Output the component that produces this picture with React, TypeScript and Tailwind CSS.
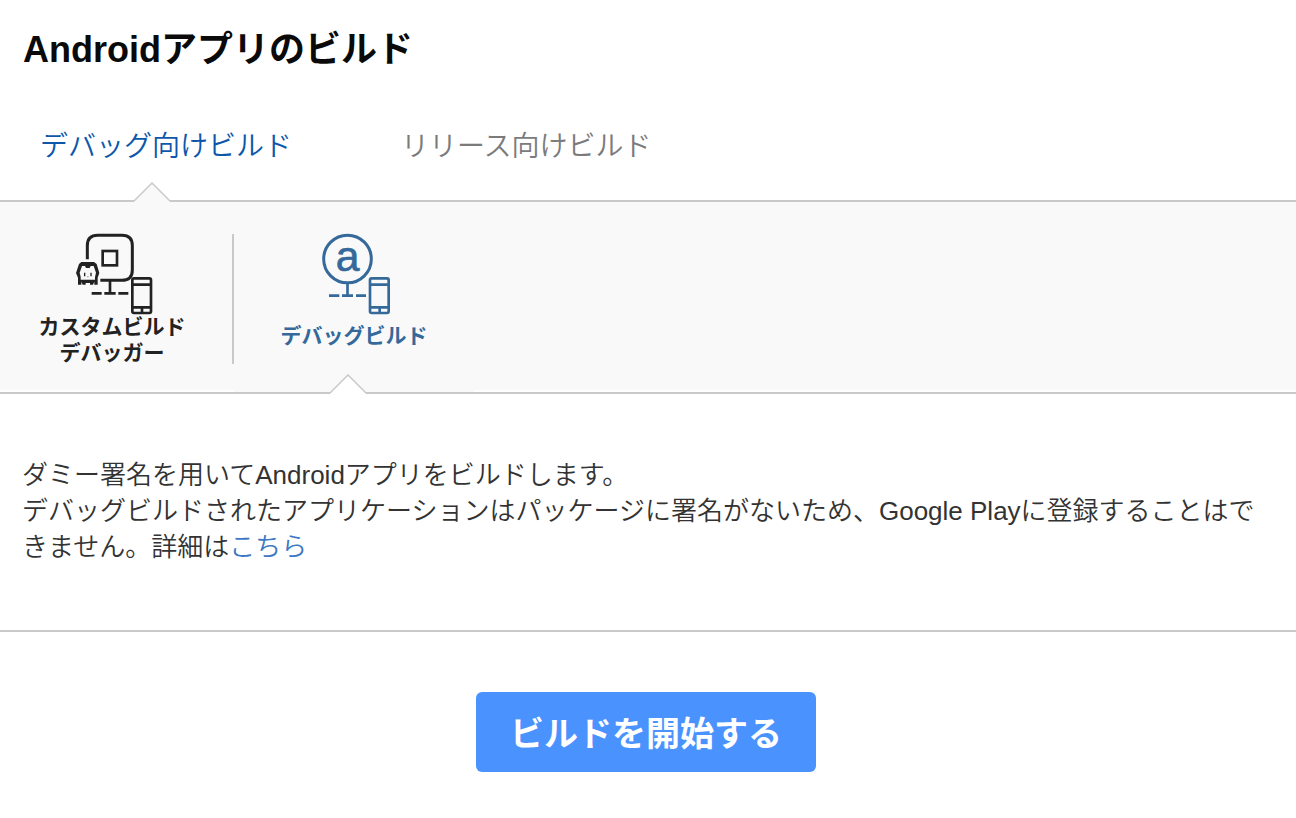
import { useState } from "react";

function Notch({ fill, className }: { fill: string; className: string }) {
  return (
    <svg className={`absolute h-5 w-9 ${className}`} viewBox="0 0 36 20" aria-hidden="true">
      <path d="M0 20 V18.6 L18 1 L36 18.6 V20 Z" fill={fill} />
      <path d="M0 19 L18 1 L36 19" fill="none" stroke="#c9c9c9" strokeWidth="1.5" />
    </svg>
  );
}

function Phone() {
  return (
    <g fill="none" stroke="currentColor" strokeWidth="8">
      <rect x="217" y="160" width="56" height="104" rx="5" />
      <path d="M216 179 H274 M216 247 H274 M246 247 V264" />
    </g>
  );
}

function CustomBuildIcon() {
  return (
    <svg className="h-20 w-20 overflow-visible" viewBox="36 27 240 240" aria-hidden="true">
      <g fill="none" stroke="currentColor">
        <path d="M82 103 V62 Q82 31 113 31 H186 Q217 31 217 62 V135 Q217 166 186 166 H121" strokeWidth="9" />
        <rect x="128" y="78" width="43" height="43" strokeWidth="8" />
        <path d="M150 168 V203" strokeWidth="8" />
        <path d="M95 205 H125 M133 205 H167 M175 205 H205" strokeWidth="8" />
      </g>
      <path
        d="M64 111 H102 L110 117 L118 144 L113 158 V179 H103 V170 L99 179 H90 V174 H77 V179 H68 L64 170 V179 H54 V158 L48 144 L57 117 Z M66 123 L59 143 L62 156 V164 H105 V156 L108 143 L101 123 H92 L89 129 H78 L75 123 Z"
        fill="currentColor"
        fillRule="evenodd"
      />
      <path d="M74 143 V154 M93 143 V154" stroke="currentColor" strokeWidth="4" />
      <path d="M81 155 H86" stroke="currentColor" strokeWidth="3" opacity="0.4" />
      <Phone />
    </svg>
  );
}

function DebugBuildIcon() {
  return (
    <svg className="h-20 w-20 overflow-visible" viewBox="42 27 240 240" aria-hidden="true">
      <g fill="none" stroke="currentColor">
        <circle cx="142.500" cy="102" r="71.500" strokeWidth="9" />
        <path d="M142.500 174 V211" strokeWidth="8" />
        <path d="M87 212 H118 M126 212 H159 M168 212 H198" strokeWidth="8" />
      </g>
      <text
        x="143"
        y="138"
        textAnchor="middle"
        fill="currentColor"
        stroke="currentColor"
        strokeWidth="2"
        className="font-['Liberation_Sans',sans-serif] text-[128px] font-normal"
      >
        a
      </text>
      <g transform="translate(-7 0)">
        <Phone />
      </g>
    </svg>
  );
}

export default function App() {
  const [target, setTarget] = useState("debug");
  const [kind, setKind] = useState("debug");

  return (
    <main className="bg-white font-['Liberation_Sans','Noto_Sans_CJK_JP',sans-serif] text-[#333]" lang="ja">
      <h1 className="px-[23px] pt-6 text-4xl leading-[52px] font-bold text-[#0a0a0a]">Androidアプリのビルド</h1>

      <nav className="relative mt-10 flex gap-[109px] border-b-2 border-[#c9c9c9] px-10 pt-[9px] pb-[31px]">
        <button
          type="button"
          onClick={() => setTarget("debug")}
          className={`cursor-pointer text-[28px] leading-[44px] font-[350] ${target === "debug" ? "text-[#0d57aa]" : "text-[#7b7b7b]"}`}
        >
          デバッグ向けビルド
        </button>
        <button
          type="button"
          onClick={() => setTarget("release")}
          className={`cursor-pointer text-[28px] leading-[44px] font-[350] ${target === "release" ? "text-[#0d57aa]" : "text-[#7b7b7b]"}`}
        >
          リリース向けビルド
        </button>
        <Notch fill="#f9f9f9" className={`-bottom-[2px] ${target === "debug" ? "left-[134px]" : "left-[508px]"}`} />
      </nav>

      <section className="relative border-b-2 border-[#c9c9c9]">
        <div className="flex items-start bg-[#f9f9f9] pt-8 pb-[26px]">
          <div className="flex h-[130px] w-[234px] items-start border-r-2 border-[#c9c9c9] pr-2">
            <button
              type="button"
              onClick={() => setKind("custom")}
              className="flex w-full cursor-pointer flex-col items-center text-[21px] leading-[26px] font-bold text-[#222]"
            >
              <CustomBuildIcon />
              <span>
                カスタムビルド
                <br />
                デバッガー
              </span>
            </button>
          </div>
          <button
            type="button"
            onClick={() => setKind("debug")}
            className="flex w-[240px] cursor-pointer flex-col items-center gap-[9px] text-[21px] leading-[26px] font-bold text-[#34699a]"
          >
            <DebugBuildIcon />
            <span>デバッグビルド</span>
          </button>
        </div>
        <div className={`h-[2px] w-[240px] bg-[#f9f9f9] ${kind === "debug" ? "ml-[234px]" : ""}`} />
        <Notch fill="#ffffff" className={`-bottom-[2px] ${kind === "debug" ? "left-[330px]" : "left-[94px]"}`} />
      </section>

      <section className="border-b-2 border-[#c9c9c9] px-[22px] pt-[63px] pb-[65px]">
        <p className="text-[26px] leading-9 font-[350]">
          ダミー署名を用いてAndroidアプリをビルドします。
          <br />
          デバッグビルドされたアプリケーションはパッケージに署名がないため、Google Playに登録することはできません。詳細は
          <a href="#detail" className="text-[#3c78c3]">
            こちら
          </a>
        </p>
      </section>

      <div className="flex justify-center pt-15 pr-1 pb-11">
        <button
          type="button"
          className="h-20 w-[340px] cursor-pointer rounded-md bg-[#4a93ff] pt-1 text-[34px] font-bold text-white"
        >
          ビルドを開始する
        </button>
      </div>
    </main>
  );
}
